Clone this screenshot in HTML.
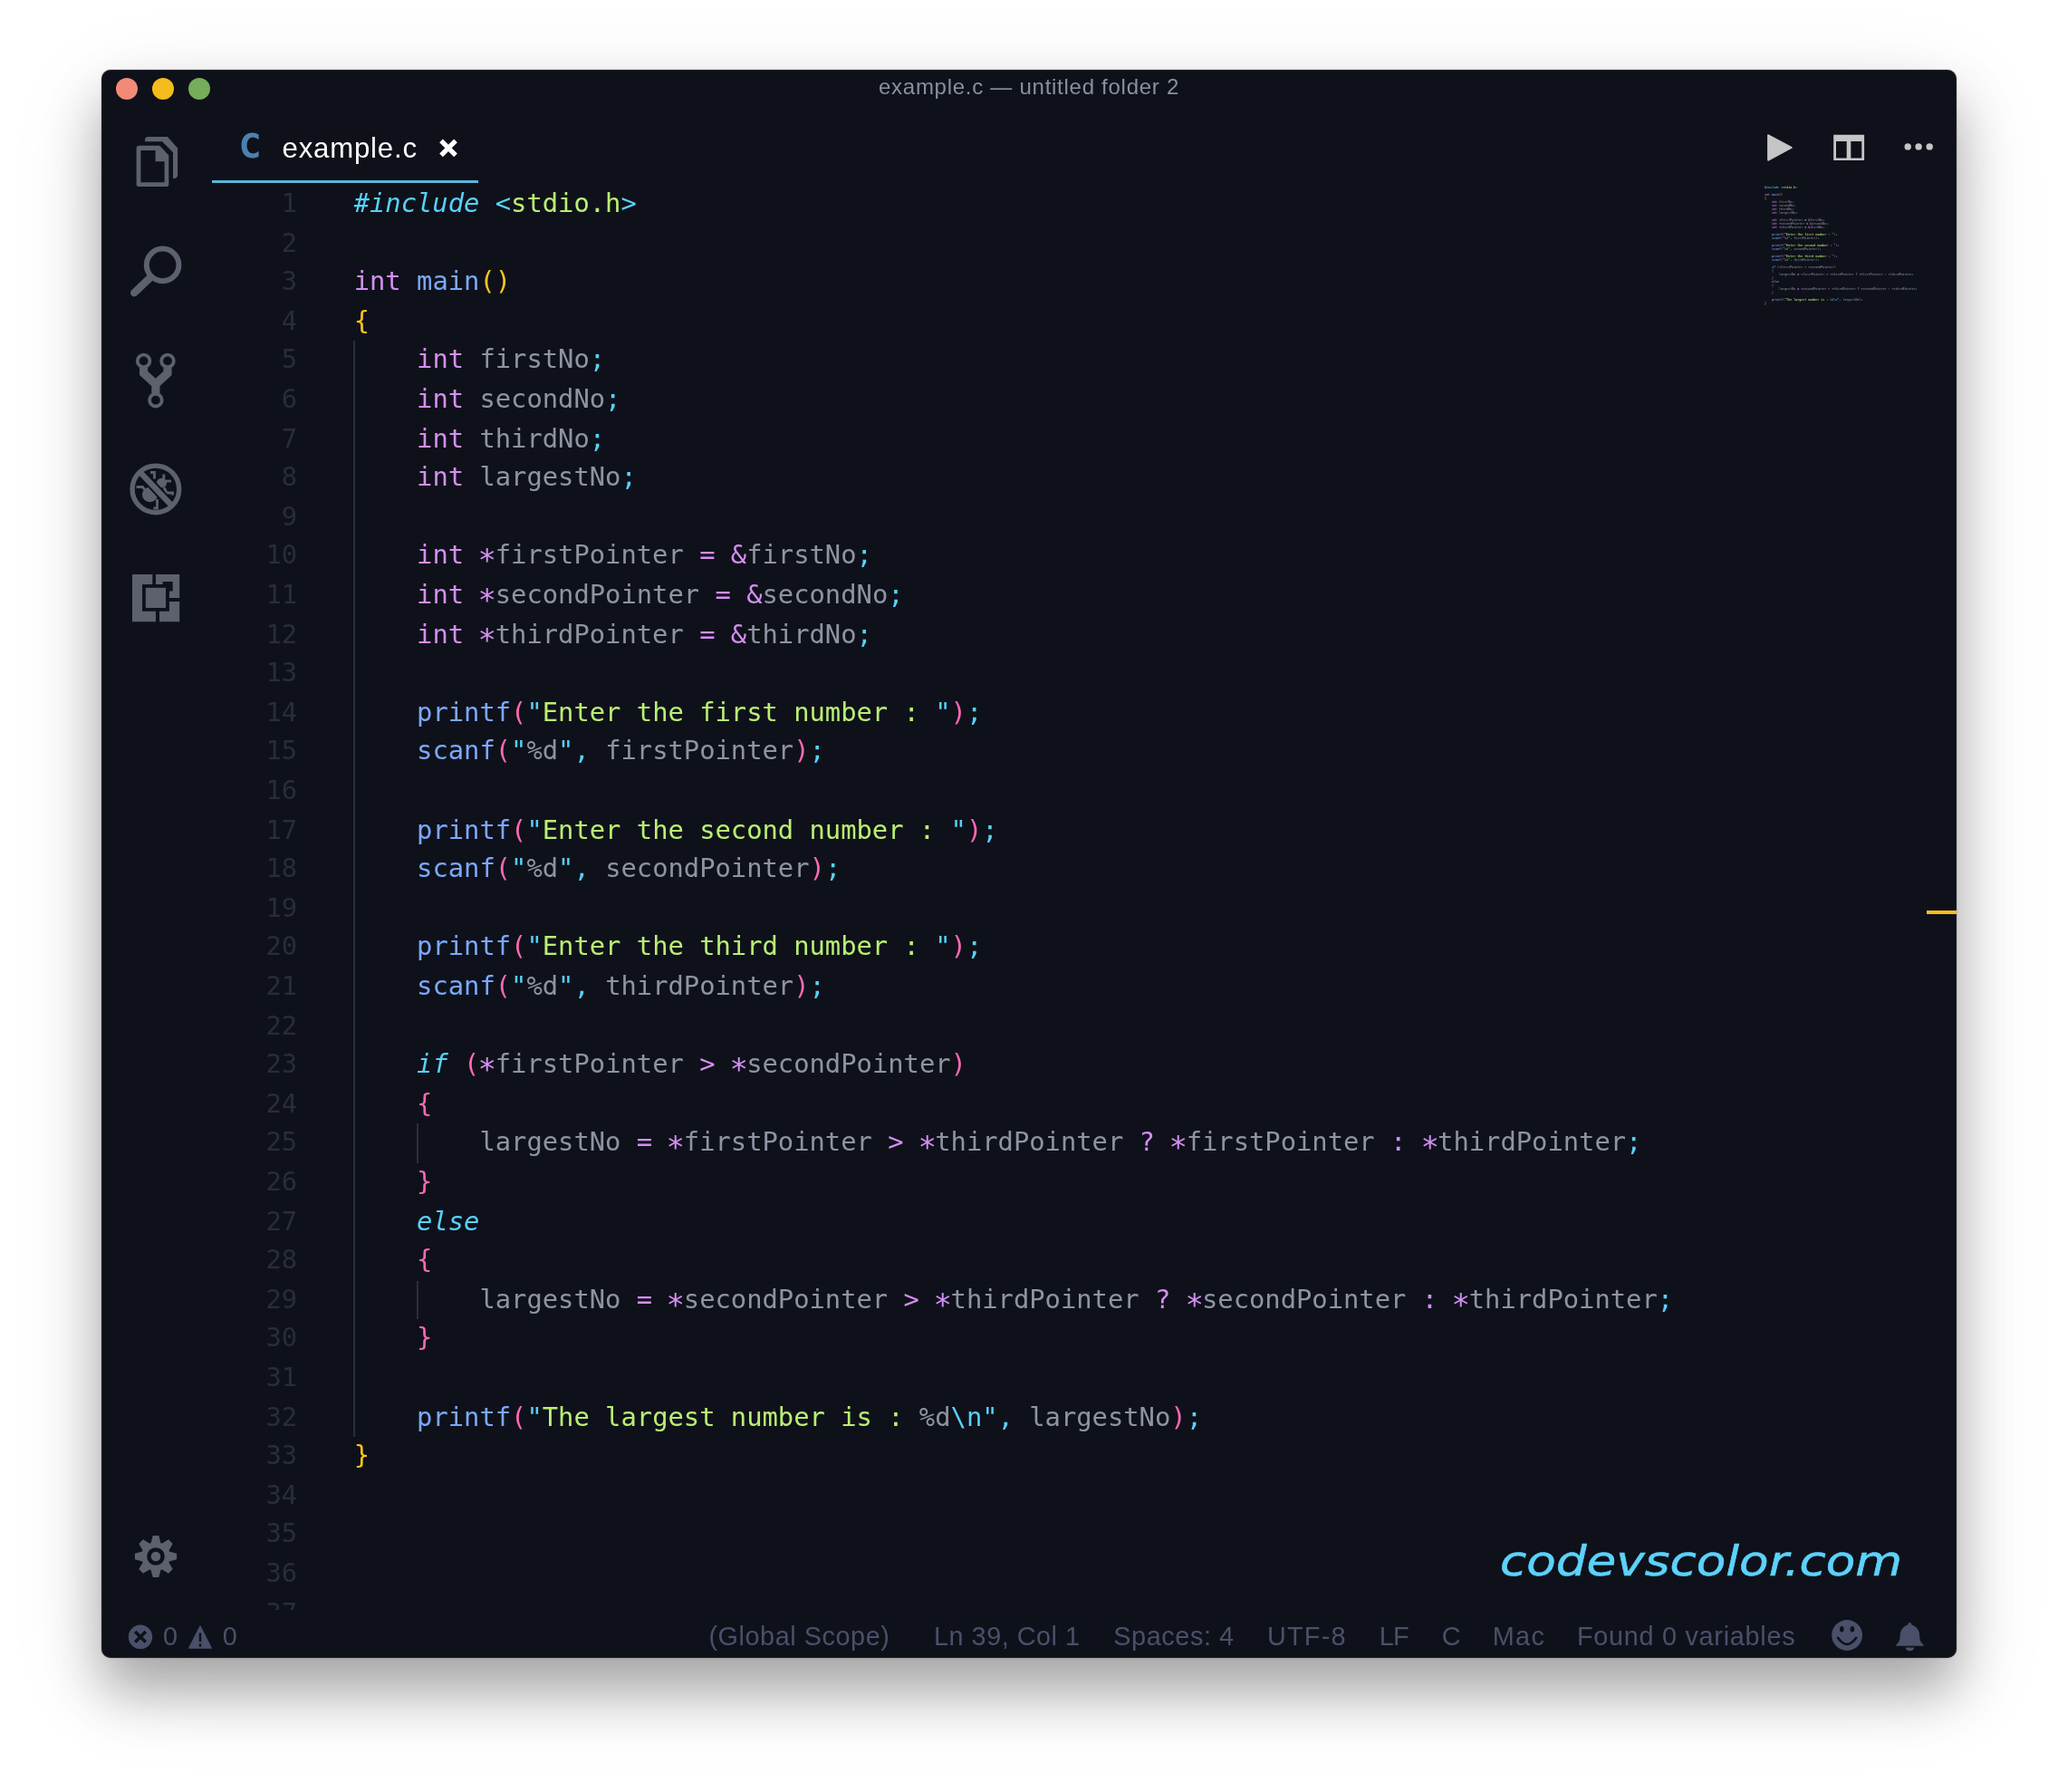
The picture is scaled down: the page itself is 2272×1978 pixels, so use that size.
<!DOCTYPE html>
<html lang="en"><head><meta charset="utf-8"><title>example.c — untitled folder 2</title>
<style>
html,body{margin:0;padding:0}
body{width:2272px;height:1978px;background:#fff;position:relative;overflow:hidden;font-family:"Liberation Sans",sans-serif}
#win{position:absolute;left:112px;top:77px;width:2048px;height:1753px;background:#0f111a;border-radius:10px;
 box-shadow:0 0 1.5px rgba(0,0,0,.45),0 36px 60px rgba(0,0,0,.30),0 30px 110px rgba(0,0,0,.10);}
#clip{position:absolute;left:0;top:0;width:2048px;height:1753px;overflow:hidden;border-radius:10px;will-change:transform;box-shadow:inset 0 0 0 1px rgba(255,255,255,.06)}
.abs{position:absolute}
.tl{position:absolute;width:24px;height:24px;border-radius:50%;top:9px}
#title{position:absolute;left:0;width:2048px;top:4.700000000000003px;text-align:center;font-size:24px;line-height:27px;letter-spacing:.73px;color:#8a8fa1;white-space:pre}
#tabname{position:absolute;left:199.49999999999997px;top:69.3px;font-size:31.2px;line-height:35px;letter-spacing:.8px;color:#fff;white-space:pre}
#tabc{position:absolute;left:152.8px;top:69.69999999999999px;width:24px;height:29px;color:#4b80b1;font-family:'DejaVu Sans','Liberation Sans',sans-serif;font-weight:bold;font-size:36.6px;line-height:29px}
#tabline{position:absolute;left:122px;top:122.30000000000001px;width:294.1px;height:2.8px;background:#57b5dd}
#code,#nums,#mini{font-family:"DejaVu Sans Mono","Liberation Mono",monospace;font-size:28.8px;line-height:43.2px;color:#8f93a2}
#code{position:absolute;left:278.7px;top:126.0px}
#nums{position:absolute;left:116.10000000000002px;width:100px;top:126.0px;text-align:right;color:#292c3b}
.ln{height:43.2px;white-space:pre}#code .ln,#nums .ln{position:absolute;left:0}#nums .ln{right:0;left:auto}
.k{color:#d48ff3}.a{display:inline-block;transform:translateY(6.1px) scale(1.18)}.f{color:#7ba9ff}.s{color:#b9ef73}.p{color:#57d2fa}.i{color:#57d2fa;font-style:italic}.g{color:#fcc61c}.h{color:#ff69b4}
#edclip{position:absolute;left:120px;top:128px;width:1928px;height:1571.5px;overflow:hidden}
.guide{position:absolute;width:2px;background:#2a2e3c}
#mini{position:absolute;left:1835.7px;top:127.5px;transform-origin:0 0;transform:scale(0.11592,0.09259)}
.st{position:absolute;top:1712.9px;font-size:28.8px;line-height:32px;color:#4a506a;white-space:pre}
#wm{position:absolute;left:1544px;top:1617.0px;font-family:'DejaVu Sans','Liberation Sans',sans-serif;font-size:47px;line-height:57px;font-style:italic;color:#5cd2fb;white-space:pre;transform-origin:0 50%;transform:scaleX(1.132);-webkit-text-stroke:.6px #5cd2fb}
svg{position:absolute;overflow:visible}
</style></head>
<body>
<div id="win"><div id="clip">
 <div class="tl" style="left:16px;background:#f28a78"></div>
 <div class="tl" style="left:56px;background:#f4bc1c"></div>
 <div class="tl" style="left:96px;background:#76ad59"></div>
 <div id="title">example.c — untitled folder 2</div>
 <div id="tabc"><span style="display:inline-block;transform-origin:0 50%;transform:scaleX(.84)">C</span></div>
 <div id="tabname">example.c</div>
 <div id="tabline"></div>
 <div id="edclip">
  <div style="position:absolute;left:-120px;top:-128px">
   <div id="nums">
<div class="ln" style="top:0px">1</div>
<div class="ln" style="top:44px">2</div>
<div class="ln" style="top:86px">3</div>
<div class="ln" style="top:130px">4</div>
<div class="ln" style="top:172px">5</div>
<div class="ln" style="top:216px">6</div>
<div class="ln" style="top:260px">7</div>
<div class="ln" style="top:302px">8</div>
<div class="ln" style="top:346px">9</div>
<div class="ln" style="top:388px">10</div>
<div class="ln" style="top:432px">11</div>
<div class="ln" style="top:476px">12</div>
<div class="ln" style="top:518px">13</div>
<div class="ln" style="top:562px">14</div>
<div class="ln" style="top:604px">15</div>
<div class="ln" style="top:648px">16</div>
<div class="ln" style="top:692px">17</div>
<div class="ln" style="top:734px">18</div>
<div class="ln" style="top:778px">19</div>
<div class="ln" style="top:820px">20</div>
<div class="ln" style="top:864px">21</div>
<div class="ln" style="top:908px">22</div>
<div class="ln" style="top:950px">23</div>
<div class="ln" style="top:994px">24</div>
<div class="ln" style="top:1036px">25</div>
<div class="ln" style="top:1080px">26</div>
<div class="ln" style="top:1124px">27</div>
<div class="ln" style="top:1166px">28</div>
<div class="ln" style="top:1210px">29</div>
<div class="ln" style="top:1252px">30</div>
<div class="ln" style="top:1296px">31</div>
<div class="ln" style="top:1340px">32</div>
<div class="ln" style="top:1382px">33</div>
<div class="ln" style="top:1426px">34</div>
<div class="ln" style="top:1468px">35</div>
<div class="ln" style="top:1512px">36</div>
<div class="ln" style="top:1556px">37</div>
   </div>
   <div class="guide" style="left:278.2px;top:298.6px;height:1210.0px"></div><div class="guide" style="left:347.6px;top:1162.6px;height:44.0px"></div><div class="guide" style="left:347.6px;top:1336.6px;height:42.0px"></div>
   <div id="code">
<div class="ln" style="top:0px"><span class="i">#include</span> <span class="p">&lt;</span><span class="s">stdio.h</span><span class="p">&gt;</span></div>
<div class="ln" style="top:86px"><span class="k">int</span> <span class="f">main</span><span class="g">()</span></div>
<div class="ln" style="top:130px"><span class="g">{</span></div>
<div class="ln" style="top:172px">    <span class="k">int</span> firstNo<span class="p">;</span></div>
<div class="ln" style="top:216px">    <span class="k">int</span> secondNo<span class="p">;</span></div>
<div class="ln" style="top:260px">    <span class="k">int</span> thirdNo<span class="p">;</span></div>
<div class="ln" style="top:302px">    <span class="k">int</span> largestNo<span class="p">;</span></div>
<div class="ln" style="top:388px">    <span class="k">int</span> <span class="k a">*</span>firstPointer <span class="k">=</span> <span class="k">&amp;</span>firstNo<span class="p">;</span></div>
<div class="ln" style="top:432px">    <span class="k">int</span> <span class="k a">*</span>secondPointer <span class="k">=</span> <span class="k">&amp;</span>secondNo<span class="p">;</span></div>
<div class="ln" style="top:476px">    <span class="k">int</span> <span class="k a">*</span>thirdPointer <span class="k">=</span> <span class="k">&amp;</span>thirdNo<span class="p">;</span></div>
<div class="ln" style="top:562px">    <span class="f">printf</span><span class="h">(</span><span class="p">"</span><span class="s">Enter the first number : </span><span class="p">"</span><span class="h">)</span><span class="p">;</span></div>
<div class="ln" style="top:604px">    <span class="f">scanf</span><span class="h">(</span><span class="p">"</span>%d<span class="p">",</span> firstPointer<span class="h">)</span><span class="p">;</span></div>
<div class="ln" style="top:692px">    <span class="f">printf</span><span class="h">(</span><span class="p">"</span><span class="s">Enter the second number : </span><span class="p">"</span><span class="h">)</span><span class="p">;</span></div>
<div class="ln" style="top:734px">    <span class="f">scanf</span><span class="h">(</span><span class="p">"</span>%d<span class="p">",</span> secondPointer<span class="h">)</span><span class="p">;</span></div>
<div class="ln" style="top:820px">    <span class="f">printf</span><span class="h">(</span><span class="p">"</span><span class="s">Enter the third number : </span><span class="p">"</span><span class="h">)</span><span class="p">;</span></div>
<div class="ln" style="top:864px">    <span class="f">scanf</span><span class="h">(</span><span class="p">"</span>%d<span class="p">",</span> thirdPointer<span class="h">)</span><span class="p">;</span></div>
<div class="ln" style="top:950px">    <span class="i">if</span> <span class="h">(</span><span class="k a">*</span>firstPointer <span class="k">&gt;</span> <span class="k a">*</span>secondPointer<span class="h">)</span></div>
<div class="ln" style="top:994px">    <span class="h">{</span></div>
<div class="ln" style="top:1036px">        largestNo <span class="k">=</span> <span class="k a">*</span>firstPointer <span class="k">&gt;</span> <span class="k a">*</span>thirdPointer <span class="k">?</span> <span class="k a">*</span>firstPointer <span class="k">:</span> <span class="k a">*</span>thirdPointer<span class="p">;</span></div>
<div class="ln" style="top:1080px">    <span class="h">}</span></div>
<div class="ln" style="top:1124px">    <span class="i">else</span></div>
<div class="ln" style="top:1166px">    <span class="h">{</span></div>
<div class="ln" style="top:1210px">        largestNo <span class="k">=</span> <span class="k a">*</span>secondPointer <span class="k">&gt;</span> <span class="k a">*</span>thirdPointer <span class="k">?</span> <span class="k a">*</span>secondPointer <span class="k">:</span> <span class="k a">*</span>thirdPointer<span class="p">;</span></div>
<div class="ln" style="top:1252px">    <span class="h">}</span></div>
<div class="ln" style="top:1340px">    <span class="f">printf</span><span class="h">(</span><span class="p">"</span><span class="s">The largest number is : </span>%d<span class="p">\n",</span> largestNo<span class="h">)</span><span class="p">;</span></div>
<div class="ln" style="top:1382px"><span class="g">}</span></div>
   </div>
  </div>
 </div>
 <div id="mini">
<div class="ln"><span class="i">#include</span> <span class="p">&lt;</span><span class="s">stdio.h</span><span class="p">&gt;</span></div>
<div class="ln"> </div>
<div class="ln"><span class="k">int</span> <span class="f">main</span><span class="g">()</span></div>
<div class="ln"><span class="g">{</span></div>
<div class="ln">    <span class="k">int</span> firstNo<span class="p">;</span></div>
<div class="ln">    <span class="k">int</span> secondNo<span class="p">;</span></div>
<div class="ln">    <span class="k">int</span> thirdNo<span class="p">;</span></div>
<div class="ln">    <span class="k">int</span> largestNo<span class="p">;</span></div>
<div class="ln"> </div>
<div class="ln">    <span class="k">int</span> <span class="k a">*</span>firstPointer <span class="k">=</span> <span class="k">&amp;</span>firstNo<span class="p">;</span></div>
<div class="ln">    <span class="k">int</span> <span class="k a">*</span>secondPointer <span class="k">=</span> <span class="k">&amp;</span>secondNo<span class="p">;</span></div>
<div class="ln">    <span class="k">int</span> <span class="k a">*</span>thirdPointer <span class="k">=</span> <span class="k">&amp;</span>thirdNo<span class="p">;</span></div>
<div class="ln"> </div>
<div class="ln">    <span class="f">printf</span><span class="h">(</span><span class="p">"</span><span class="s">Enter the first number : </span><span class="p">"</span><span class="h">)</span><span class="p">;</span></div>
<div class="ln">    <span class="f">scanf</span><span class="h">(</span><span class="p">"</span>%d<span class="p">",</span> firstPointer<span class="h">)</span><span class="p">;</span></div>
<div class="ln"> </div>
<div class="ln">    <span class="f">printf</span><span class="h">(</span><span class="p">"</span><span class="s">Enter the second number : </span><span class="p">"</span><span class="h">)</span><span class="p">;</span></div>
<div class="ln">    <span class="f">scanf</span><span class="h">(</span><span class="p">"</span>%d<span class="p">",</span> secondPointer<span class="h">)</span><span class="p">;</span></div>
<div class="ln"> </div>
<div class="ln">    <span class="f">printf</span><span class="h">(</span><span class="p">"</span><span class="s">Enter the third number : </span><span class="p">"</span><span class="h">)</span><span class="p">;</span></div>
<div class="ln">    <span class="f">scanf</span><span class="h">(</span><span class="p">"</span>%d<span class="p">",</span> thirdPointer<span class="h">)</span><span class="p">;</span></div>
<div class="ln"> </div>
<div class="ln">    <span class="i">if</span> <span class="h">(</span><span class="k a">*</span>firstPointer <span class="k">&gt;</span> <span class="k a">*</span>secondPointer<span class="h">)</span></div>
<div class="ln">    <span class="h">{</span></div>
<div class="ln">        largestNo <span class="k">=</span> <span class="k a">*</span>firstPointer <span class="k">&gt;</span> <span class="k a">*</span>thirdPointer <span class="k">?</span> <span class="k a">*</span>firstPointer <span class="k">:</span> <span class="k a">*</span>thirdPointer<span class="p">;</span></div>
<div class="ln">    <span class="h">}</span></div>
<div class="ln">    <span class="i">else</span></div>
<div class="ln">    <span class="h">{</span></div>
<div class="ln">        largestNo <span class="k">=</span> <span class="k a">*</span>secondPointer <span class="k">&gt;</span> <span class="k a">*</span>thirdPointer <span class="k">?</span> <span class="k a">*</span>secondPointer <span class="k">:</span> <span class="k a">*</span>thirdPointer<span class="p">;</span></div>
<div class="ln">    <span class="h">}</span></div>
<div class="ln"> </div>
<div class="ln">    <span class="f">printf</span><span class="h">(</span><span class="p">"</span><span class="s">The largest number is : </span>%d<span class="p">\n",</span> largestNo<span class="h">)</span><span class="p">;</span></div>
<div class="ln"><span class="g">}</span></div>
 </div>
 <div id="wm">codevscolor.com</div>
 <div class="st" style="left:67.9px;letter-spacing:0px">0</div>
 <div class="st" style="left:133.8px;letter-spacing:0px">0</div>
 <div class="st" style="left:670.4px;letter-spacing:0.57px">(Global Scope)</div>
 <div class="st" style="left:919.0px;letter-spacing:0.52px">Ln 39, Col 1</div>
 <div class="st" style="left:1117.2px;letter-spacing:0.61px">Spaces: 4</div>
 <div class="st" style="left:1286.9px;letter-spacing:1.28px">UTF-8</div>
 <div class="st" style="left:1410.7px;letter-spacing:-0.65px">LF</div>
 <div class="st" style="left:1479.7px;letter-spacing:0px">C</div>
 <div class="st" style="left:1535.7px;letter-spacing:1.43px">Mac</div>
 <div class="st" style="left:1628.9px;letter-spacing:0.74px">Found 0 variables</div>
 
<svg width="2048" height="1753" viewBox="112 77 2048 1753" style="left:0;top:0">
 <!-- files icon -->
 <path fill="#5d616d" fill-rule="evenodd" d="M153 160.8 H176.3 L186.3 171.6 V203.5 Q186.3 206 183.8 206 H153 Q150.6 206 150.6 203.5 V163.3 Q150.6 160.8 153 160.8 Z M155.4 166 V201.2 H181.6 V178.3 H171.6 V166 Z"/>
 <path fill="#5d616d" d="M159.9 156.2 V155 Q159.9 151.1 163.6 151.1 H185 L196.1 163.5 V193 Q196.1 197 191.7 197 H191 V168.2 L179 156.2 Z"/>
 <!-- search -->
 <circle cx="179.6" cy="292.4" r="17.8" fill="none" stroke="#5d616d" stroke-width="6"/>
 <path d="M165.5 306.8 L148.2 323.2" stroke="#5d616d" stroke-width="8.4" stroke-linecap="round"/>
 <!-- git -->
 <g fill="none" stroke="#5d616d">
  <circle cx="158.6" cy="398.4" r="6.8" stroke-width="3.8"/>
  <circle cx="185" cy="398.4" r="6.8" stroke-width="3.8"/>
  <circle cx="171.9" cy="441.7" r="6.8" stroke-width="3.8"/>
  <path d="M158.6 405.6 V412 L171.9 424 V434.6 M185 405.6 V412 L171.9 424" stroke-width="9.2" stroke-linejoin="miter"/>
 </g>
 <!-- debug -->
 <g fill="#5d616d">
  <ellipse cx="165.5" cy="546" rx="8.6" ry="8.2"/>
  <ellipse cx="178.5" cy="533" rx="5.6" ry="5.2"/>
 </g>
 <g fill="none" stroke="#5d616d" stroke-width="2.8">
  <path d="M150.5 537.5 H157.5 L160 541"/>
  <path d="M173.5 551 V561 H169.5"/>
  <path d="M166 521.5 H170.5 V528.5"/>
  <path d="M180.8 523.5 V529"/>
  <path d="M183 531 H189"/>
  <path d="M181 538 L184 544 H190.5 V546.5"/>
 </g>
 <path d="M155.5 522 L189 557.5" stroke="#0f111a" stroke-width="10.4"/>
 <circle cx="171.9" cy="539.9" r="25.8" fill="none" stroke="#5d616d" stroke-width="5.4"/>
 <path d="M153.5 520 L191 559.5" stroke="#5d616d" stroke-width="6.2"/>
 <!-- extensions -->
 <g fill="#5d616d" transform="translate(146 634)">
  <path d="M0 0 H22.3 V10.9 H11.05 V40.7 H26 V52.2 H0 Z"/>
  <path d="M26 0 H52.2 V26 H40.9 V18.6 H44.7 V7.9 H33.7 V10.9 H26 Z"/>
  <rect x="14.8" y="14.8" width="22.2" height="22.2"/>
  <path d="M40.9 30 H52.2 V52.2 H30 V40.7 H40.9 Z"/>
 </g>
 <!-- gear -->
 <g transform="translate(172 1718)" fill="#5d616d">
  <g id="teeth">
   <path d="M-3.3 -23.1 H3.3 L6.2 -12 H-6.2 Z"/>
   <path d="M-3.3 -23.1 H3.3 L6.2 -12 H-6.2 Z" transform="rotate(45)"/>
   <path d="M-3.3 -23.1 H3.3 L6.2 -12 H-6.2 Z" transform="rotate(90)"/>
   <path d="M-3.3 -23.1 H3.3 L6.2 -12 H-6.2 Z" transform="rotate(135)"/>
   <path d="M-3.3 -23.1 H3.3 L6.2 -12 H-6.2 Z" transform="rotate(180)"/>
   <path d="M-3.3 -23.1 H3.3 L6.2 -12 H-6.2 Z" transform="rotate(225)"/>
   <path d="M-3.3 -23.1 H3.3 L6.2 -12 H-6.2 Z" transform="rotate(270)"/>
   <path d="M-3.3 -23.1 H3.3 L6.2 -12 H-6.2 Z" transform="rotate(315)"/>
  </g>
  <circle r="15.8"/>
  <circle r="9.8" fill="#0f111a"/>
  <circle r="5.3"/>
 </g>
 <!-- editor actions -->
 <path d="M1952.2 149.4 L1977.6 162.9 L1952.2 176.6 Z" fill="#c5c5c5" stroke="#c5c5c5" stroke-width="2.2" stroke-linejoin="round"/>
 <path d="M2024.2 148.8 H2058.1 V177.1 H2024.2 Z M2027 156.1 V174.6 H2038.7 V156.1 Z M2043.3 156.1 V174.6 H2055.3 V156.1 Z" fill="#c5c5c5" fill-rule="evenodd"/>
 <circle cx="2106.2" cy="161.9" r="3.7" fill="#c5c5c5"/><circle cx="2118.1" cy="161.9" r="3.7" fill="#c5c5c5"/><circle cx="2130.2" cy="161.9" r="3.7" fill="#c5c5c5"/>
 <!-- tab close -->
 <path d="M487 155.3 L503 171.3 M503 155.3 L487 171.3" stroke="#fff" stroke-width="5.2" fill="none"/>
 <!-- overview ruler mark -->
 <rect x="2127" y="1005" width="33" height="4" fill="#f4bf1b"/>
 <!-- status: error -->
 <circle cx="155" cy="1806.8" r="13.2" fill="#4a5069"/>
 <path d="M149.2 1801 L160.8 1812.6 M160.8 1801 L149.2 1812.6" stroke="#0f111a" stroke-width="3.6"/>
 <!-- status: warning -->
 <path d="M221 1794.6 L233.6 1819.2 H208.4 Z" fill="#4a5069" stroke="#4a5069" stroke-width="1" stroke-linejoin="round"/>
 <path d="M221 1802.5 V1812.2 M221 1814.4 V1817.4" stroke="#0f111a" stroke-width="2.6"/>
 <!-- smiley -->
 <circle cx="2039.1" cy="1805" r="16.9" fill="#4a5069"/>
 <ellipse cx="2033.3" cy="1798.2" rx="2.3" ry="3.3" fill="#0f111a"/>
 <ellipse cx="2044.9" cy="1798.2" rx="2.3" ry="3.3" fill="#0f111a"/>
 <path d="M2029 1807.8 Q2039.1 1822 2049.2 1807.8" fill="none" stroke="#0f111a" stroke-width="2.6" stroke-linecap="round"/>
 <!-- bell -->
 <path d="M2108.4 1791 q1.8 0 2 2.2 q8.8 3 8.8 13 q0 6 4.2 9 v1.6 h-30 v-1.6 q4.2 -3 4.2 -9 q0 -10 8.8 -13 q0.2 -2.2 2 -2.2 Z" fill="#4a5069"/>
 <path d="M2103.6 1818.4 h9.6 q-0.6 3.8 -4.8 3.8 q-4.2 0 -4.8 -3.8 Z" fill="#4a5069"/>
</svg>

</div></div>
</body></html>
